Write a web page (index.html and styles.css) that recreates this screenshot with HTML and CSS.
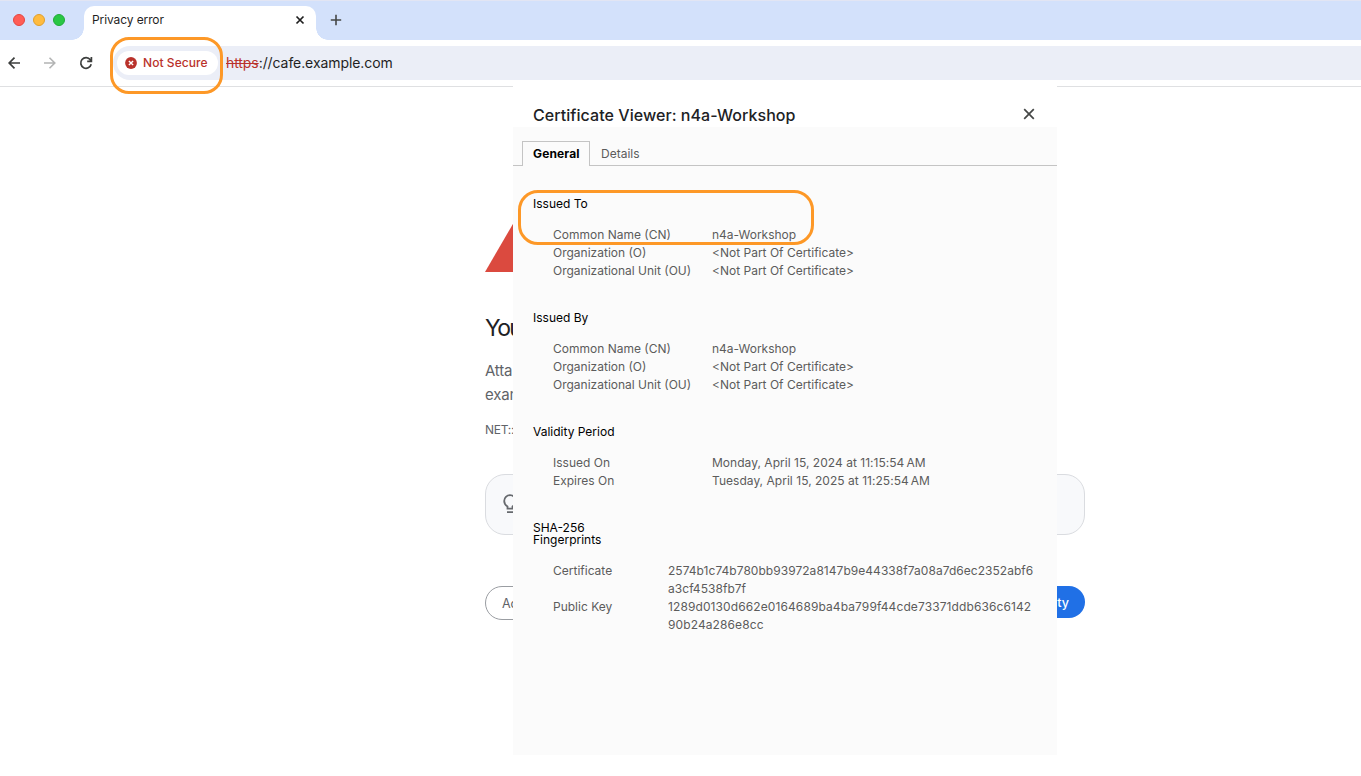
FILE: index.html
```html
<!DOCTYPE html>
<html lang="en">
<head>
<meta charset="utf-8">
<title>Privacy error</title>
<link rel="stylesheet" href="styles.css">
</head>
<body>
<div class="browser">
  <header class="tabstrip">
    <div class="lights"><i class="light red"></i><i class="light yellow"></i><i class="light green"></i></div>
    <div class="tab">
      <span class="tab-title">Privacy error</span>
      <svg class="tab-close" width="10" height="10" viewBox="0 0 10 10"><path d="M1.5 1.5l7 7M8.500 1.500l-7 7" stroke="#1f1f1f" stroke-width="1.7"/></svg>
    </div>
    <svg class="new-tab" width="12" height="12" viewBox="0 0 12 12"><path d="M6 .8v10.400M.8 6h10.400" stroke="#454746" stroke-width="1.6"/></svg>
  </header>
  <div class="toolbar">
    <div class="nav">
      <svg width="14" height="14" viewBox="0 0 14 14" fill="none" stroke="#3c3e3d" stroke-width="1.700"><path d="M13 7H2.500M7.500 1.700L2.200 7l5.300 5.300"/></svg>
      <svg width="14" height="14" viewBox="0 0 14 14" fill="none" stroke="#b3b4b4" stroke-width="1.600"><path d="M1 7h10.500M6.500 1.700L11.800 7l-5.300 5.300"/></svg>
      <svg width="14" height="14" viewBox="0 0 14 14" fill="none" stroke="#3c3e3d" stroke-width="1.700"><path d="M12.200 8.300A5.300 5.300 0 1 1 11.300 3.800L12.300 5M12.400 1v4.300H8.200"/></svg>
    </div>
    <div class="omnibox">
      <div class="chip">
        <svg width="12" height="12" viewBox="0 0 12 12"><circle cx="6" cy="6" r="5.900" fill="#b9322b"/><path d="M3.900 3.900l4.200 4.200M8.100 3.900L3.900 8.100" stroke="#fff" stroke-width="1.400"/></svg>
        <span class="chip-text">Not Secure</span>
        <div class="mark mark-chip"></div>
      </div>
      <div class="url"><span class="scheme">https</span><span class="host">://cafe.example.com</span></div>
    </div>
  </div>
  <main class="page">
    <div class="warning">
      <svg class="triangle" width="72" height="62" viewBox="0 0 72 62"><path d="M0 62L36 0l36 62z" fill="#db4a3f"/></svg>
      <h1>You</h1>
      <p class="lead">Atta<br>exam</p>
      <p class="code">NET::</p>
      <div class="tip">
        <svg width="14" height="20" viewBox="0 0 14 20" fill="none" stroke="#66696d" stroke-width="1.800"><path d="M4.500 14.700v-2.200C2.500 11.200 1.200 9.500 1.200 7a5.800 5.800 0 0 1 11.600 0c0 2.500-1.300 4.200-3.300 5.500v2.200zM4 18.200h6"/></svg>
      </div>
      <div class="buttons"><span class="btn advanced">Ad</span><span class="btn safety">ty</span></div>
    </div>
    <section class="dialog">
      <div class="dialog-head">
        <h2>Certificate Viewer: n4a-Workshop</h2>
        <svg width="12" height="12" viewBox="0 0 12 12"><path d="M1.200 1.200l9.600 9.600M10.800 1.200l-9.600 9.600" stroke="#454746" stroke-width="1.700"/></svg>
      </div>
      <div class="dialog-tabs"><span class="dtab active">General</span><span class="dtab details">Details</span></div>
      <div class="dialog-body">
        <div class="group">
          <h3>Issued To</h3>
          <dl>
            <dt>Common Name (CN)</dt><dd>n4a-Workshop</dd>
            <dt>Organization (O)</dt><dd>&lt;Not Part Of Certificate&gt;</dd>
            <dt>Organizational Unit (OU)</dt><dd>&lt;Not Part Of Certificate&gt;</dd>
          </dl>
          <div class="mark mark-issued"></div>
        </div>
        <div class="group">
          <h3>Issued By</h3>
          <dl>
            <dt>Common Name (CN)</dt><dd>n4a-Workshop</dd>
            <dt>Organization (O)</dt><dd>&lt;Not Part Of Certificate&gt;</dd>
            <dt>Organizational Unit (OU)</dt><dd>&lt;Not Part Of Certificate&gt;</dd>
          </dl>
        </div>
        <div class="group">
          <h3>Validity Period</h3>
          <dl>
            <dt>Issued On</dt><dd class="date">Monday, April 15, 2024 at 11:15:54<span class="thin"></span>AM</dd>
            <dt>Expires On</dt><dd class="date">Tuesday, April 15, 2025 at 11:25:54<span class="thin"></span>AM</dd>
          </dl>
        </div>
        <div class="group">
          <h3>SHA-256<br>Fingerprints</h3>
          <dl class="prints">
            <dt>Certificate</dt><dd class="hash">2574b1c74b780bb93972a8147b9e44338f7a08a7d6ec2352abf6<br>a3cf4538fb7f</dd>
            <dt>Public Key</dt><dd class="hash key">1289d0130d662e0164689ba4ba799f44cde73371ddb636c6142<br>90b24a286e8cc</dd>
          </dl>
        </div>
      </div>
    </section>
  </main>
</div>
</body>
</html>
```
FILE: styles.css
```css
* { box-sizing: border-box; }
body { margin: 0; background: #fff; font-family: Inter, "Liberation Sans", sans-serif; }
h1, h2, h3, p, dl, dd { margin: 0; font-weight: 400; }
svg { display: block; flex: none; }
.browser { display: flex; flex-direction: column; height: 776px; overflow: hidden; white-space: nowrap; }
.tabstrip { display: flex; height: 40px; background: #d3e1fb; border-top: 1px solid #e2e5f3; }
.lights { display: flex; gap: 8px; width: 84px; padding: 13px 0 0 13px; }
.light { width: 12px; height: 12px; border-radius: 50%; }
.red { background: #ff5d56; border: 1px solid #e4453f; }
.yellow { background: #ffbb3f; border: 1px solid #e09f2b; }
.green { background: #29c744; border: 1px solid #20ab37; }
.tab { position: relative; display: flex; align-items: center; justify-content: space-between; width: 232px; margin-top: 5px; padding: 0 11px 6px 8px; background: #fff; border-radius: 10px 10px 0 0; }
.tab::before, .tab::after { content: ""; position: absolute; bottom: 0; width: 12px; height: 12px; }
.tab::before { left: -12px; background: radial-gradient(circle at 0 0, transparent 11.500px, #fff 12px); }
.tab::after { right: -12px; background: radial-gradient(circle at 100% 0, transparent 11.500px, #fff 12px); }
.tab-title { padding-bottom: 2px; font-size: 12px; letter-spacing: -0.1px; color: #1f1f1f; }
.new-tab { margin: 13px 0 0 14px; }
.toolbar { display: flex; align-items: center; height: 47px; border-bottom: 1px solid #dfe0e2; }
.nav { display: flex; gap: 22px; width: 113px; padding-left: 7px; }
.omnibox { display: flex; align-items: center; flex: 1; height: 34px; padding-left: 4px; background: #ebeef7; border-radius: 17px 0 0 17px; }
.chip { position: relative; display: flex; align-items: center; gap: 6px; width: 101px; height: 24px; padding-left: 8px; background: #fff; border-radius: 12px; color: #b9322b; font-size: 12px; font-weight: 500; }
.chip-text { padding-bottom: 2px; letter-spacing: 0.06px; }
.mark { position: absolute; border: 3px solid #fd9827; }
.mark-chip { left: -7px; top: -14px; width: 113px; height: 57px; border-radius: 19px; }
.url { margin-left: 8px; padding-bottom: 2px; font-size: 14px; letter-spacing: -0.08px; color: #1f1f1f; }
.scheme { color: #b9322b; text-decoration: line-through; }
.page { position: relative; flex: 1; }
.warning { width: 600px; margin-left: 485px; padding-top: 123px; }
h1 { margin-top: 42px; font-size: 23px; line-height: 28px; letter-spacing: -1.7px; color: #202124; }
.lead { margin-top: 17px; font-size: 15px; line-height: 24px; letter-spacing: -0.2px; color: #5f6368; }
.code { margin-top: 14px; font-size: 12px; line-height: 18px; letter-spacing: -0.25px; color: #5f6368; }
.tip { height: 61px; margin-top: 35px; padding: 19px 17px; background: #f8f9fb; border: 1px solid #dadce0; border-radius: 20px; }
.buttons { display: flex; justify-content: space-between; margin-top: 51px; }
.btn { font-size: 12.5px; line-height: 34px; height: 32px; border-radius: 17px; }
.advanced { width: 100px; height: 34px; padding-left: 16px; border: 1px solid #9a9da2; color: #5f6368; }
.safety { width: 120px; padding-right: 16px; text-align: right; background: #2070e6; color: #fff; font-weight: 500; }
.dialog { position: absolute; left: 513px; top: -1px; width: 544px; height: 669px; background: #fbfbfb; font-size: 12px; }
.dialog-head { display: flex; justify-content: space-between; height: 41px; padding: 19px 22px 0 20px; background: #fff; }
.dialog-head svg { margin-top: 3px; }
h2 { font-size: 16px; line-height: 20px; font-weight: 500; letter-spacing: 0.05px; color: #202124; }
.dialog-tabs { display: flex; height: 39px; padding: 14px 0 0 9px; border-bottom: 1px solid #c4c4c4; line-height: 25px; }
.dtab { height: 25px; }
.active { width: 68px; padding-left: 10px; border: 1px solid #c4c4c4; border-bottom: 0; background: #fbfbfb; font-weight: 700; line-height: 24px; letter-spacing: 0.15px; color: #000; }
.details { padding-left: 11px; color: #5c5c5c; }
.dialog-body { display: flex; flex-direction: column; gap: 32px; padding: 32px 20px 0; }
.group { position: relative; }
h3 { font-size: 12px; line-height: 12px; color: #000; }
dl { display: grid; grid-template-columns: 159px 1fr; margin: 16px 0 0 20px; line-height: 18px; color: #5c5c5c; }
.prints { grid-template-columns: 115px 1fr; }
.date { letter-spacing: 0.03px; }
.hash { letter-spacing: 0.04px; }
.key { letter-spacing: 0.1px; }
.thin { display: inline-block; width: 2px; }
.mark-issued { left: -15px; top: -8px; width: 296px; height: 55px; border-radius: 20px; }
```
